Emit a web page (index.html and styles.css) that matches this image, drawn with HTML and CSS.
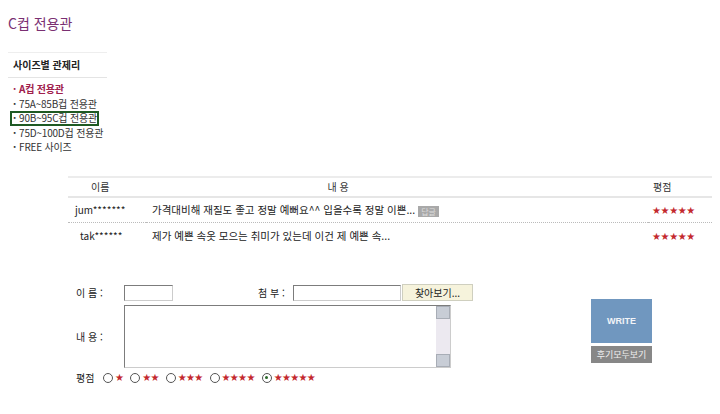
FILE: index.html
```html
<!DOCTYPE html>
<html lang="ko">
<head>
    <meta charset="UTF-8">
    <title>C컵 전용관</title>
    <link rel="stylesheet" href="styles.css">
</head>
<body>
    <h1 class="page-title">C컵 전용관</h1>

    <div class="side-menu">
        <div class="side-head">사이즈별 관제리</div>
        <ul class="side-list">
            <li class="active">A컵 전용관</li>
            <li>75A~85B컵 전용관</li>
            <li class="boxed">90B~95C컵 전용관</li>
            <li>75D~100D컵 전용관</li>
            <li>FREE 사이즈</li>
        </ul>
    </div>

    <table class="review-table">
        <tr class="head-row">
            <th class="col-name">이름</th>
            <th class="col-text">내 용</th>
            <th class="col-rate">평점</th>
        </tr>
        <tr class="first-row">
            <td class="col-name">jum*******</td>
            <td class="col-text">가격대비해 재질도 좋고 정말 예뻐요^^ 입을수록 정말 이쁜... <span class="reply">답글</span></td>
            <td class="col-rate"><span class="stars">★★★★★</span></td>
        </tr>
        <tr>
            <td class="col-name indent">tak******</td>
            <td class="col-text">제가 예쁜 속옷 모으는 취미가 있는데 이건 제 예쁜 속...</td>
            <td class="col-rate"><span class="stars">★★★★★</span></td>
        </tr>
    </table>

    <div class="write-area">
        <div class="form">
            <div class="form-row">
                <span class="label">이 름 :</span>
                <span class="input name-input"></span>
                <span class="label attach-label">첨 부 :</span>
                <span class="input file-input"></span>
                <span class="browse">찾아보기...</span>
            </div>
            <div class="form-row text-row">
                <span class="label">내 용 :</span>
                <div class="textarea">
                    <div class="scroll">
                        <span class="arrow-box"></span>
                        <span class="arrow-box"></span>
                    </div>
                </div>
            </div>
            <div class="rating-row">
                <span class="label">평점</span>
                <span class="opt"><span class="radio"></span><span class="stars">★</span></span>
                <span class="opt"><span class="radio"></span><span class="stars">★★</span></span>
                <span class="opt"><span class="radio"></span><span class="stars">★★★</span></span>
                <span class="opt"><span class="radio"></span><span class="stars">★★★★</span></span>
                <span class="opt"><span class="radio checked"></span><span class="stars">★★★★★</span></span>
            </div>
        </div>
        <div class="buttons">
            <div class="write-btn">WRITE</div>
            <div class="all-btn">후기모두보기</div>
        </div>
    </div>
</body>
</html>
```

FILE: styles.css
```css
* {
    margin: 0;
    padding: 0;
    box-sizing: border-box;
}

body {
    font-family: "Noto Sans CJK KR", "DejaVu Sans", sans-serif;
    font-size: 10px;
    color: #222;
    background: #fff;
    padding: 14px 0 0 8px;
}

.page-title {
    font-size: 14px;
    font-weight: normal;
    color: #7a2f72;
    line-height: 18px;
}

.side-menu {
    width: 99px;
    margin-top: 20px;
    border-top: 1px solid #eee;
}

.side-head {
    font-weight: bold;
    font-size: 10px;
    line-height: 14px;
    padding: 5px 0 5px 5px;
    border-bottom: 1px solid #e4e4e4;
    color: #222;
}

.side-list {
    list-style: none;
    padding-top: 4px;
}

.side-list li {
    line-height: 14.5px;
    height: 14.5px;
    padding-left: 5px;
    font-size: 10px;
    color: #333;
    white-space: nowrap;
    letter-spacing: -0.2px;
}

.side-list li::before {
    content: "·";
    margin-right: 3px;
    font-weight: bold;
}

.side-list li.active {
    color: #a0204c;
    font-weight: bold;
}

.side-list li.boxed {
    border: 2px solid #1f5a23;
    margin-left: 2px;
    width: 89px;
    padding-left: 1px;
    line-height: 10.5px;
}

.review-table {
    margin: 21px 0 0 60px;
    width: 644px;
    border-collapse: collapse;
    border-top: 2px solid #ececec;
    font-size: 10px;
}

.review-table th {
    font-weight: normal;
    height: 20px;
    border-bottom: 2px solid #e6e6e6;
    color: #333;
}

.review-table td {
    height: 26px;
    color: #222;
}

.first-row td {
    border-bottom: 1px dotted #bbb;
}

.col-name {
    width: 78px;
    text-align: left;
    padding-left: 7px;
}

th.col-name {
    padding-left: 23px;
}

.indent {
    padding-left: 12px;
}

.col-text {
    text-align: left;
    padding-left: 6px;
    font-size: 10.5px;
}

th.col-text {
    text-align: center;
    padding-right: 124px;
    font-size: 10px;
}

.col-rate {
    width: 64px;
    text-align: left;
    padding-left: 4px;
}

th.col-rate {
    padding-left: 5px;
}

.reply {
    display: inline-block;
    background: #a9a9a9;
    color: #ddd;
    font-size: 8px;
    line-height: 11px;
    padding: 0 3px;
    vertical-align: middle;
}

.stars {
    color: #c3282d;
    font-size: 10px;
    letter-spacing: -0.4px;
    font-family: "DejaVu Sans", sans-serif;
}

.write-area {
    display: flex;
    margin: 35px 0 0 68px;
}

.form {
    width: 460px;
}

.form-row {
    display: flex;
    align-items: center;
    height: 18px;
}

.label {
    width: 48px;
    font-size: 10px;
    color: #222;
    white-space: nowrap;
}

.input {
    display: block;
    height: 16px;
    border: 1px solid #7c7c7c;
    border-right-color: #ccc;
    border-bottom-color: #ccc;
    background: #fff;
}

.name-input {
    width: 49px;
}

.attach-label {
    margin-left: 85px;
    width: 35px;
}

.file-input {
    width: 108px;
}

.browse {
    display: block;
    width: 71px;
    height: 17px;
    line-height: 16px;
    margin-left: 1px;
    background: #f6f3dc;
    border: 1px solid #cfcfbf;
    text-align: center;
    font-size: 10px;
}

.text-row {
    height: 63px;
    margin-top: 3px;
}

.textarea {
    width: 327px;
    height: 63px;
    border: 1px solid #7c7c7c;
    border-right-color: #ccc;
    border-bottom-color: #ccc;
    display: flex;
    justify-content: flex-end;
}

.scroll {
    width: 14px;
    height: 100%;
    background: #ece9f0;
    display: flex;
    flex-direction: column;
    justify-content: space-between;
}

.arrow-box {
    display: block;
    width: 14px;
    height: 13px;
    background: #c8cdd6;
    border: 1px solid #a8adb6;
}

.rating-row {
    display: flex;
    align-items: center;
    height: 14px;
    margin-top: 3px;
}

.rating-row .label {
    width: 27px;
}

.opt {
    display: flex;
    align-items: center;
    margin-right: 7px;
}

.opt .stars {
    letter-spacing: -0.7px;
}

.radio {
    width: 10px;
    height: 10px;
    border: 1px solid #555;
    border-radius: 50%;
    margin-right: 2px;
    position: relative;
}

.radio.checked::after {
    content: "";
    position: absolute;
    left: 2.5px;
    top: 2.5px;
    width: 3px;
    height: 3px;
    border-radius: 50%;
    background: #2a6a2a;
}

.buttons {
    margin: 15px 0 0 55px;
    width: 61px;
}

.write-btn {
    height: 44px;
    line-height: 44px;
    background: #7097bf;
    color: #f2f4f8;
    font-family: "Liberation Sans", sans-serif;
    font-weight: bold;
    font-size: 9px;
    text-align: center;
}

.all-btn {
    margin-top: 3px;
    height: 17px;
    line-height: 17px;
    background: #878787;
    color: #eee;
    font-size: 9px;
    text-align: center;
}
```
